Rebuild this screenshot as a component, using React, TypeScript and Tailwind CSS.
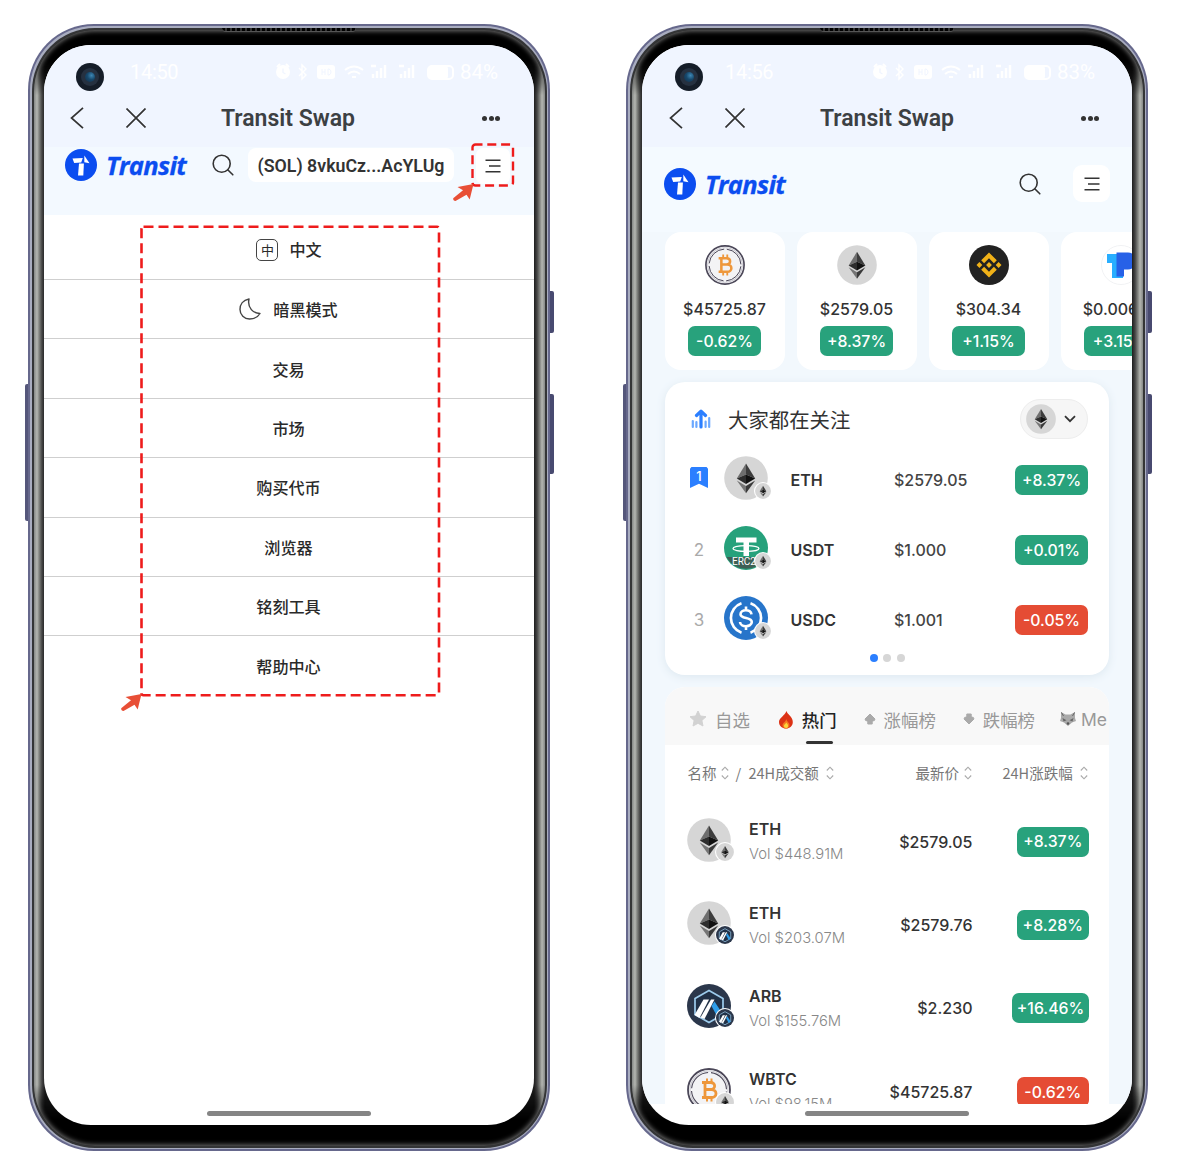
import React from "react";

type IconProps = { className?: string };

const NUM = "font-['Inter','Noto_Sans_CJK_SC',sans-serif]";
const CJK = "font-['Noto_Sans_CJK_SC',sans-serif]";

function EthIcon({ className }: IconProps) {
  return (
    <svg viewBox="0 0 44 44" className={className}>
      <circle cx="22" cy="22" r="21.8" fill="#d6d6d6" />
      <path d="M22 7.5 12.8 22.5 22 18.5Z" fill="#6e6e6e" />
      <path d="M22 7.5 31.2 22.5 22 18.5Z" fill="#3c3c3c" />
      <path d="M12.8 22.5 22 18.5V28Z" fill="#2d2d2d" />
      <path d="M31.2 22.5 22 18.5V28Z" fill="#111" />
      <path d="M12.8 24.6 22 30v7.2Z" fill="#757575" />
      <path d="M31.2 24.6 22 30v7.2Z" fill="#3a3a3a" />
    </svg>
  );
}

function BtcIcon({ className }: IconProps) {
  return (
    <svg viewBox="0 0 44 44" className={className} fill="none">
      <circle cx="22" cy="22" r="21" fill="#fff" stroke="#4b4758" strokeWidth="1.8" />
      <circle cx="22" cy="22" r="19" stroke="#c9c8d0" strokeWidth="1.2" />
      <circle cx="22" cy="22" r="17.500" fill="#f3f3f5" stroke="#4b4758" strokeWidth="1.1" strokeDasharray="24.500 3" strokeDashoffset="-1.500" />
      <g stroke="#ee973b" strokeWidth="2.8" strokeLinejoin="round">
        <path d="M15 14.5h8.5c5.500 0 5.500 7 0 7H18h6.500c6 0 6 8 0 8H15M18 14.500v15" />
        <path d="M20 10.500v4M24.500 10.500v4M20 29.500v4M24.500 29.500v4" strokeWidth="2" />
      </g>
    </svg>
  );
}

function BnbIcon({ className }: IconProps) {
  return (
    <svg viewBox="0 0 40 40" className={className}>
      <circle cx="20" cy="20" r="20" fill="#222" />
      <g fill="#f0b118">
        <path d="m20 7.5 7.800 7.800-2.900 2.900-4.900-4.900-4.900 4.900-2.900-2.900Z" />
        <path d="m20 32.500 7.800-7.800-2.900-2.900-4.900 4.900-4.900-4.900-2.900 2.900Z" />
        <path d="m20 17.100 2.900 2.900-2.900 2.900-2.900-2.900ZM10.400 17.100l2.900 2.900-2.900 2.900L7.500 20ZM29.600 17.100l2.900 2.900-2.900 2.900-2.900-2.900Z" />
      </g>
    </svg>
  );
}

function TpIcon({ className }: IconProps) {
  return (
    <svg viewBox="0 0 40 40" className={className}>
      <circle cx="20" cy="20" r="19.5" fill="#fff" stroke="#f1f2f4" />
      <path d="M6 9h16v24H11V18H6Z" fill="#29aeff" />
      <path d="M15.500 7.500H27a8.500 8.500 0 0 1 0 17h-4v7h-7.500Z" fill="#2761e7" />
    </svg>
  );
}

function UsdtIcon({ className }: IconProps) {
  return (
    <svg viewBox="0 0 44 44" className={className}>
      <circle cx="22" cy="22" r="22" fill="#26a17b" />
      <path d="M2.500 31h39a22 22 0 0 1-39 0Z" fill="#3d5f55" />
      <path d="M12 11.500h20.500v5H25v13.500h-5.500V16.500H12Z" fill="#fff" />
      <ellipse cx="22" cy="22.500" rx="13" ry="2.900" fill="none" stroke="#fff" strokeWidth="1.200" />
      <text x="8" y="38.500" fontSize="10" fontFamily="Roboto" fill="#fff">ERC2</text>
    </svg>
  );
}

function UsdcIcon({ className }: IconProps) {
  return (
    <svg viewBox="0 0 44 44" className={className} fill="none" stroke="#fff" strokeWidth="2.700">
      <circle cx="22" cy="22" r="22" fill="#2775ca" stroke="none" />
      <path d="M17.500 7.300a15.500 15.500 0 0 0 0 29.400M26.500 7.300a15.500 15.500 0 0 1 0 29.400" />
      <path d="M27.500 18.300c-.5-5.500-11-5.500-11 0 0 5 11.300 2.600 11.300 7.800 0 5.500-11.600 5.500-11.800-.1M22 10.500v4M22 29.800V34" strokeWidth="2.600" />
    </svg>
  );
}

function ArbIcon({ className }: IconProps) {
  return (
    <svg viewBox="0 0 44 44" className={className}>
      <circle cx="22" cy="22" r="22" fill="#2b374b" />
      <path d="m22 6.500 14 8v16l-14 8-14-8v-16Z" fill="#213147" stroke="#9dcced" strokeWidth="1.700" />
      <path d="M16.500 15.500H22L12.500 34l-5-3Z" fill="#fff" />
      <path d="M24 15.500h3.500L17.500 35l-4-1.500Z" fill="#fff" />
      <path d="m24.500 22 3-4.500 8.500 13-5 3.500Z" fill="#2f9de8" />
    </svg>
  );
}

function TransitLogo() {
  return (
    <div className="flex items-center">
      <svg viewBox="0 0 32 32" className="size-[32px]">
        <circle cx="16" cy="16" r="16" fill="#0b4df0" />
        <path d="M7.500 9.600 17.800 9l-1.600 4.500L9.200 14Z" fill="#fff" />
        <path d="m19.300 6.500 5.200 7.700-5.200-.9Z" fill="#fff" />
        <path d="M14 14.400h4.900l-.6 12.200h-5.300Z" fill="#fff" />
      </svg>
      <span className="ml-[9px] font-['Open_Sans',sans-serif] text-[25.500px] font-bold italic leading-[31px] tracking-[-0.700px] text-[#0b4df0] [-webkit-text-stroke:0.300px_#0b4df0]">Transit</span>
    </div>
  );
}

function SearchIcon() {
  return (
    <svg viewBox="0 0 22 22" className="size-[22px]" fill="none" stroke="#333" strokeWidth="1.600" strokeLinecap="round">
      <circle cx="9.700" cy="9.700" r="8.500" />
      <path d="m16 16 4.800 4.800" />
    </svg>
  );
}

function MenuIcon() {
  return (
    <svg viewBox="0 0 16 14" className="h-[14px] w-[16px]" stroke="#333" strokeWidth="1.500">
      <path d="M.5 1.200h15M4 7h11.500M.5 12.800h15" />
    </svg>
  );
}

function StatusBar({ time, battery, shift }: { time: string; battery: string; shift?: boolean }) {
  return (
    <div className="flex h-[54px] items-center text-white">
      <div className={"mt-[10px] flex size-[28px] items-center justify-center rounded-full bg-[#151d28] " + (shift ? "ml-[33px]" : "ml-[32px]")}>
        <div className="flex size-[18px] items-center justify-center rounded-full bg-[#263140]">
          <div className="size-[10px] rounded-full bg-[radial-gradient(circle_at_65%_35%,#3d86b3,#17496c_45%,#142e48)]" />
        </div>
      </div>
      <span className={"w-[60px] font-['Roboto',sans-serif] text-[20px] tracking-[-0.300px] " + (shift ? "ml-[22px]" : "ml-[26px]")}>{time}</span>
      <svg viewBox="0 0 182 20" className={"h-[20px] w-[182px] " + (shift ? "ml-[87px]" : "ml-[85px]")} fill="none" stroke="#fff" strokeWidth="2">
        <circle cx="8" cy="10" r="6" fill="#fff" />
        <path d="m2 5 3-3m6 0 3 3" />
        <path d="m8 6.500v4l2.500 1.500" stroke="#f0f5ff" strokeWidth="1.300" />
        <path d="m24 6 7 7-4 4V3l4 4-7 7" strokeWidth="1.400" />
        <rect x="43" y="4" width="16" height="12" rx="2" fill="#fff" />
        <path d="M47 7v6m0-3h3m0-3v6m3-6v6h1q2-1 2-3t-2-3Z" stroke="#f0f5ff" strokeWidth="1" />
        <path d="M70 8q9-7 18 0M73 12q6-5 12 0M77 15h4" />
        <path d="M98 16v-4m4 4V9m4 7V6m4 10V3M96 4h5" strokeWidth="2.400" />
        <path d="M126 16v-4m4 4V9m4 7V6m4 10V3M124 4h5" strokeWidth="2.400" />
        <rect x="153" y="4" width="25" height="13" rx="4" />
        <rect x="154" y="5" width="18" height="11" rx="2" fill="#fff" />
      </svg>
      <span className="ml-[3px] font-['Roboto',sans-serif] text-[20.500px]">{battery}</span>
    </div>
  );
}

function TitleBar({ shift }: { shift?: boolean }) {
  return (
    <div className={"flex h-[48px] items-center pb-[10px] " + (shift ? "pl-[1px]" : "")}>
      <svg viewBox="0 0 14 22" className="ml-[26px] h-[22px] w-[14px]" fill="none" stroke="#333" strokeWidth="1.700">
        <path d="M13 .8 1.500 11 13 21.200" />
      </svg>
      <svg viewBox="0 0 20 20" className="ml-[42px] size-[20px]" stroke="#333" strokeWidth="1.700">
        <path d="m.5.5 19 19m0-19-19 19" />
      </svg>
      <h1 className="ml-[75px] w-[135px] whitespace-nowrap pt-[2px] font-['Roboto',sans-serif] text-[23px] font-semibold leading-[28px] text-[#3c4043]">Transit Swap</h1>
      <div className="ml-[126px] flex gap-[1.500px]">
        <i className="size-[5px] rounded-full bg-[#333]" />
        <i className="size-[5px] rounded-full bg-[#333]" />
        <i className="size-[5px] rounded-full bg-[#333]" />
      </div>
    </div>
  );
}

function Phone({ children, screen }: { children: React.ReactNode; screen: string }) {
  return (
    <div className="relative h-[1127px] w-[522px] shrink-0">
      <div className="absolute left-[-3px] top-[360px] h-[137px] w-[6px] rounded-[2px] bg-[#55577b]" />
      <div className="absolute right-[-4px] top-[267px] h-[42px] w-[7px] rounded-[2px] bg-[#484a70]" />
      <div className="absolute right-[-4px] top-[370px] h-[80px] w-[7px] rounded-[2px] bg-[#484a70]" />
      <div className="relative h-full rounded-[66px] bg-[#66688c] p-[2px]">
        <div className="h-full rounded-[64px] bg-[#a9adc0] p-[1.500px]">
          <div className="h-full rounded-[63px] bg-[#343536] p-[2px]">
            <div className="relative h-full overflow-hidden rounded-[61px] bg-black shadow-[inset_0_0_5px_1px_#777]">
              <div className="absolute inset-0 bg-[linear-gradient(to_right,#858886,#b4b6b1_3px,#858783_5px,#444_8px,#1d1d1d_11px,#1d1d1d_500px,#444_503px,#858783_506px,#b4b6b1_508px,#858886)] [mask-image:linear-gradient(transparent_30px,black_65px,black_1055px,transparent_1090px)]" />
            </div>
          </div>
        </div>
        <div className="absolute left-[194px] top-[4px] h-[4px] w-[134px] rounded-b-[4px] border-b border-[#555] bg-[repeating-linear-gradient(to_right,#000_0px,#000_3px,#333_3px,#333_5px)]" />
        <div className={"absolute left-[16px] top-[21px] flex h-[1080px] w-[490px] flex-col overflow-hidden rounded-[47px] " + screen}>{children}</div>
      </div>
    </div>
  );
}

const HomeBar = () => <div className="absolute bottom-[9px] left-[163px] h-[5px] w-[164px] rounded-full bg-[#858585]" />;

function PointerArrow({ className }: IconProps) {
  return (
    <svg viewBox="0 0 21 17" className={className}>
      <path d="M20.500 0 16.700 15.500l-3.200-4.700L2.500 17Q0 17 .2 14.300l9.800-8L4.500 3Z" fill="#e84f36" />
    </svg>
  );
}

const MENU: { label: string; icon?: "lang" | "moon" }[] = [
  { label: "中文", icon: "lang" },
  { label: "暗黑模式", icon: "moon" },
  { label: "交易" },
  { label: "市场" },
  { label: "购买代币" },
  { label: "浏览器" },
  { label: "铭刻工具" },
  { label: "帮助中心" },
];

function MenuPhone() {
  return (
    <Phone screen="bg-white">
      <div className="shrink-0 bg-[#f0f5ff]">
        <StatusBar time="14:50" battery="84%" />
        <TitleBar />
      </div>
      <div className="flex h-[68px] shrink-0 items-start bg-[#f3f9ff] pl-[21px] pt-[1px]">
        <div className="mt-[1px] w-[147px]"><TransitLogo /></div>
        <div className="mt-[6px]"><SearchIcon /></div>
        <div className="ml-[14px] flex h-[34px] w-[206px] items-center justify-center whitespace-nowrap rounded-[8px] bg-white pt-[2px] font-['Roboto',sans-serif] text-[17.800px] font-semibold text-[#333]">(SOL) 8vkuCz...AcYLUg</div>
        <div className="ml-[22px] flex h-[36px] w-[34px] items-center justify-center rounded-[7px] bg-white"><MenuIcon /></div>
      </div>
      <nav className="flex flex-col">
        {MENU.map((m, i) => (
          <div
            key={m.label}
            className={
              CJK + " flex shrink-0 items-center justify-center text-[16.100px] font-medium text-[#2a2a2a] " +
              (i === 0 ? "h-[65px] pt-[5px] " : "h-[59.400px] pr-[1px] ") +
              (i === 1 ? "pb-[1px] " : "") +
              (i < 7 ? "border-b border-[#cfcfcf]" : "")
            }
          >
            {m.icon === "lang" && (
              <span className="mr-[11px] flex size-[22px] items-center justify-center rounded-[5px] border-[1.500px] border-[#444] text-[13px] font-normal leading-none">中</span>
            )}
            {m.icon === "moon" && (
              <svg viewBox="0 0 22 22" className="mr-[12px] size-[22px]" fill="none" stroke="#444" strokeWidth="1.400" strokeLinejoin="round">
                <path d="M10 1C4 2 1 6.500 1 11.500a9.500 9.500 0 0 0 9.500 9.500c4.500 0 8.500-2 10.500-5.500C14.500 15.500 8 10 10 1Z" />
              </svg>
            )}
            {m.label}
          </div>
        ))}
      </nav>
      <HomeBar />
      <svg viewBox="0 0 44 44" className="absolute left-[427px] top-[98px] size-[44px]" fill="none" stroke="#ee1c1c" strokeWidth="2.400">
        <rect x="1.500" y="1.500" width="40.500" height="41" rx="3" strokeDasharray="9 4.800" strokeDashoffset="2" />
      </svg>
      <PointerArrow className="absolute left-[409px] top-[139px] h-[17px] w-[21px]" />
      <svg viewBox="0 0 302 473" className="absolute left-[96px] top-[180px] h-[473px] w-[302px]" fill="none" stroke="#ee1c1c" strokeWidth="2.600">
        <rect x="1.500" y="1.800" width="297.500" height="468.500" rx="2" strokeDasharray="10 5" />
      </svg>
      <PointerArrow className="absolute left-[77px] top-[649px] h-[17px] w-[21px]" />
    </Phone>
  );
}

function Badge({ value, down, className = "w-[73px]" }: { value: string; down?: boolean; className?: string }) {
  return (
    <span className={NUM + " flex h-[30px] shrink-0 items-center justify-center rounded-[7px] pt-px text-[15.800px] font-medium text-white " + (down ? "bg-[#e54c34] " : "bg-[#28a27c] ") + className}>
      {value}
    </span>
  );
}

type Icon = (p: IconProps) => React.ReactElement;

function TokenIcon({ Main, Sub, big }: { Main: Icon; Sub: Icon; big?: boolean }) {
  return (
    <div className="relative size-[44px] shrink-0">
      <Main className="size-[44px]" />
      <div className={"absolute rounded-full bg-white p-[1px] " + (big ? "left-[28px] top-[24px] size-[20px]" : "left-[30px] top-[26px] size-[18px]")}>
        <Sub className="size-full" />
      </div>
    </div>
  );
}

const CARDS: { Icon: Icon; price: string; change: string }[] = [
  { Icon: BtcIcon, price: "$45725.87", change: "-0.62%" },
  { Icon: EthIcon, price: "$2579.05", change: "+8.37%" },
  { Icon: BnbIcon, price: "$304.34", change: "+1.15%" },
  { Icon: TpIcon, price: "$0.00688", change: "+3.15%" },
];

const WATCH: { Icon: Icon; name: string; price: string; change: string; down?: boolean }[] = [
  { Icon: EthIcon, name: "ETH", price: "$2579.05", change: "+8.37%" },
  { Icon: UsdtIcon, name: "USDT", price: "$1.000", change: "+0.01%" },
  { Icon: UsdcIcon, name: "USDC", price: "$1.001", change: "-0.05%", down: true },
];

const HOT: { Icon: Icon; Sub: Icon; name: string; vol: string; price: string; change: string; down?: boolean; wide?: boolean }[] = [
  { Icon: EthIcon, Sub: EthIcon, name: "ETH", vol: "$448.91M", price: "$2579.05", change: "+8.37%" },
  { Icon: EthIcon, Sub: ArbIcon, name: "ETH", vol: "$203.07M", price: "$2579.76", change: "+8.28%" },
  { Icon: ArbIcon, Sub: ArbIcon, name: "ARB", vol: "$155.76M", price: "$2.230", change: "+16.46%", wide: true },
  { Icon: BtcIcon, Sub: EthIcon, name: "WBTC", vol: "$98.15M", price: "$45725.87", change: "-0.62%", down: true },
];

function Sort({ className }: IconProps) {
  return (
    <svg viewBox="0 0 8 14" className={"h-[14px] w-[8px] shrink-0 " + className} fill="none" stroke="#aaa" strokeWidth="1.100">
      <path d="M.8 4.500 4 1.200l3.200 3.300M.8 9.500 4 12.800l3.200-3.300" />
    </svg>
  );
}

function Tabs() {
  return (
    <div className={CJK + " flex h-[58px] shrink-0 items-center overflow-hidden whitespace-nowrap bg-[#f8f8f8] pl-[24px] pt-[8px] text-[17.400px] text-[#999]"}>
      <svg viewBox="0 0 18 17" className="mt-[-4px] h-[17px] w-[18px] shrink-0" fill="#d2d2d2" stroke="#d2d2d2" strokeLinejoin="round">
        <path d="m9 1 2.400 5 5.600.7-4.100 3.800 1.100 5.500L9 13.300 4 16l1.100-5.500L1 6.700 6.600 6Z" />
      </svg>
      <span className="ml-[8px]">自选</span>
      <svg viewBox="0 0 16 18" className="ml-[28px] mt-[-1px] h-[18px] w-[16px] shrink-0">
        <path d="M8.500 0c.8 3.500 6.300 5.500 6.300 11 0 4-3 6.500-6.800 6.500S1 15 1 11c0-4 5.500-6 7.500-11Z" fill="#dc3215" />
        <path d="M8.500 8c0 2.500 3 3.500 3 6 0 2-1.500 3.500-3.500 3.500s-3.500-1.500-3.500-3.300c0-2.200 3-3.200 4-6.200Z" fill="#f5771f" />
        <path d="M8.300 11.500c.6 1.200 1.800 1.600 1.800 3.200 0 1.500-1 2.300-2.100 2.300S6 16.200 6 14.800c0-1.300 1.600-1.800 2.300-3.300Z" fill="#fcd53b" />
      </svg>
      <span className="relative ml-[8px] font-medium text-[#222]">
        热门
        <i className="absolute left-[4px] top-[34px] h-[3px] w-[27px] rounded-full bg-[#333]" />
      </span>
      <svg viewBox="0 0 12 12" className="ml-[27px] mt-[-2px] size-[12px] shrink-0" fill="#aaa" stroke="#aaa" strokeLinejoin="round">
        <path d="m6 1 5 5q0 2.200-2.800 2V11H3.800V8Q1 8.200 1 6Z" />
      </svg>
      <span className="ml-[8px]">涨幅榜</span>
      <svg viewBox="0 0 12 12" className="ml-[27px] mt-[-2px] size-[12px] shrink-0" fill="#aaa" stroke="#aaa" strokeLinejoin="round">
        <path d="m6 11 5-5q0-2.200-2.800-2V1H3.800v3Q1 3.800 1 6Z" />
      </svg>
      <span className="ml-[8px]">跌幅榜</span>
      <svg viewBox="0 0 16 15" className="ml-[25px] mt-[-4px] h-[15px] w-[16px] shrink-0">
        <path d="m1 1 4.500 2.500h5L15 1v6l1 3-4 1.500L8 15l-4-3.500L0 10l1-3Z" fill="#aaa" />
        <path d="m2.500 7 4 2.200-3 1.300ZM13.500 7l-4 2.200 3 1.300Z" fill="#666" />
        <path d="m1.500 1.500 2 3.500M14.500 1.500l-2 3.500" stroke="#666" />
        <circle cx="8" cy="12.500" r="1.300" fill="#555" />
      </svg>
      <span className={NUM + " ml-[5px] text-[17.500px]"}>Me</span>
    </div>
  );
}

function MarketPhone() {
  return (
    <Phone screen="bg-white">
      <div className="shrink-0 bg-[#f0f5ff]">
        <StatusBar time="14:56" battery="83%" shift />
        <TitleBar shift />
      </div>
      <main className="flex h-[957px] shrink-0 flex-col overflow-hidden bg-[#f2f8fd]">
        <header className="flex h-[85px] shrink-0 items-start bg-[#f4faff] pl-[22px] pt-[18px]">
          <div className="mt-[3px] w-[355px]"><TransitLogo /></div>
          <div className="mt-[8px]"><SearchIcon /></div>
          <div className="ml-[32px] flex size-[37px] items-center justify-center rounded-[9px] bg-white"><MenuIcon /></div>
        </header>

        <section className="flex shrink-0 gap-[12px] overflow-hidden pl-[22.500px]">
          {CARDS.map(({ Icon, price, change }) => (
            <div key={price} className="flex h-[138px] w-[120px] shrink-0 flex-col items-center rounded-[16px] bg-white pt-[13px]">
              <Icon className="size-[40px]" />
              <span className={NUM + " mt-[13px] text-[16px] font-medium leading-[22px] text-[#333]"}>{price}</span>
              <Badge value={change} className="mt-[6px] w-[73px]" />
            </div>
          ))}
        </section>

        <section className="ml-[23px] mt-[12px] flex h-[293px] w-[444px] shrink-0 flex-col rounded-[20px] bg-white shadow-[0_2px_10px_#dde8f0]">
          <div className="flex h-[63px] items-center pl-[26px] pr-[21px] pt-[11px]">
            <svg viewBox="0 0 20 20" className="size-[20px]" fill="none" stroke="#2b7fff" strokeWidth="3.200" strokeLinecap="round" strokeLinejoin="round">
              <path d="M1.800 12V18M18.200 9V18M14.600 12.500V18M5.400 13v5" stroke="#6ba8ff" strokeWidth="2.200" />
              <path d="M10 18V3M5.500 6.500 10 2.200l4.500 4.300" />
            </svg>
            <h2 className={CJK + " ml-[17px] flex-1 text-[20.400px] leading-[28px] text-[#333]"}>大家都在关注</h2>
            <div className="flex h-[40px] w-[68px] items-center rounded-full border border-[#ededed] bg-[#f6f6f6] pl-[5px]">
              <EthIcon className="size-[30px]" />
              <svg viewBox="0 0 12 8" className="ml-[8px] h-[8px] w-[12px]" fill="none" stroke="#333" strokeWidth="1.800"><path d="m1 1.200 5 5 5-5" /></svg>
            </div>
          </div>
          {WATCH.map((t, i) => (
            <div key={t.name} className="flex h-[70px] items-center pl-[25px]">
              {i === 0 ? (
                <div className="mb-[5px] flex h-[21px] w-[18px] justify-center bg-[#2b7fff] font-['Inter',sans-serif] text-[13px] font-medium leading-[18px] text-white [clip-path:polygon(0_8%,8%_0,92%_0,100%_8%,100%_100%,50%_80%,0_100%)]">1</div>
              ) : (
                <div className={NUM + " mt-[1px] w-[18px] text-center text-[17px] text-[#aaa]"}>{i + 1}</div>
              )}
              <div className="mb-[4px] ml-[16px]"><TokenIcon Main={t.Icon} Sub={EthIcon} /></div>
              <span className={NUM + " ml-[22.500px] w-[103.500px] text-[16px] font-semibold text-[#333]"}>{t.name}</span>
              <span className={NUM + " w-[121px] text-[16px] font-medium text-[#444]"}>{t.price}</span>
              <Badge value={t.change} down={t.down} />
            </div>
          ))}
          <div className="ml-[204.500px] mt-[-1px] flex gap-[5.500px]">
            <i className="size-[8px] rounded-full bg-[#2b7fff]" />
            <i className="size-[8px] rounded-full bg-[#d6d6d6]" />
            <i className="size-[8px] rounded-full bg-[#d6d6d6]" />
          </div>
        </section>

        <section className="ml-[23px] mt-[12px] flex h-[500px] w-[444px] shrink-0 flex-col overflow-hidden rounded-t-[20px] bg-white">
          <Tabs />
          <div className={CJK + " flex h-[55px] shrink-0 items-center whitespace-nowrap pl-[22.500px] text-[14.500px] text-[#777]"}>
            <span className="w-[29px]">名称</span>
            <Sort className="ml-[4px]" />
            <span className="ml-[7px] w-[13px]">/</span>
            <span className="w-[71px]">24H成交额</span>
            <Sort className="ml-[6px]" />
            <span className="ml-[82px] w-[44px]">最新价</span>
            <Sort className="ml-[4px]" />
            <span className="ml-[31px] w-[71px]">24H涨跌幅</span>
            <Sort className="ml-[6px]" />
          </div>
          {HOT.map((t) => (
            <div key={t.name + t.vol} className="flex h-[83.400px] shrink-0 items-center pl-[22px] pr-[20px]">
              <div className="mb-[4px]"><TokenIcon Main={t.Icon} Sub={t.Sub} big /></div>
              <div className={NUM + " ml-[18px] w-[118px] whitespace-nowrap pt-px"}>
                <div className="text-[16px] font-semibold leading-[25px] text-[#333]">{t.name}</div>
                <div className="text-[14.800px] font-light leading-[25px] text-[#888]">Vol {t.vol}</div>
              </div>
              <span className={NUM + " flex-1 text-right text-[16px] font-medium text-[#333] " + (t.wide ? "mr-[39.500px]" : "mr-[44px]")}>{t.price}</span>
              <Badge value={t.change} down={t.down} className={t.wide ? "w-[77px]" : "w-[72.500px]"} />
            </div>
          ))}
        </section>
      </main>
      <HomeBar />
    </Phone>
  );
}

export default function App() {
  return (
    <div className="flex h-[1164px] w-[1181px] gap-[76px] overflow-hidden bg-white pl-[28px] pt-[24px]">
      <MenuPhone />
      <MarketPhone />
    </div>
  );
}
